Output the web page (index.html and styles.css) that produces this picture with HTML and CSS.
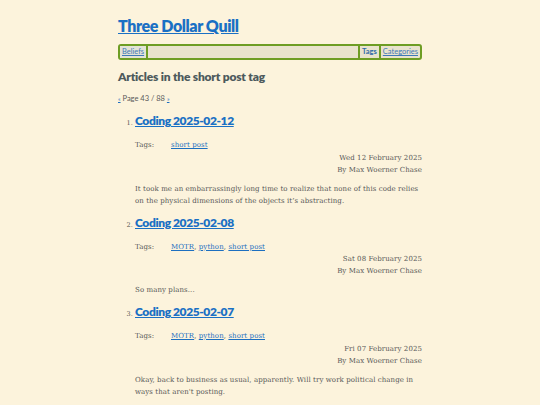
FILE: index.html
```html
<!DOCTYPE html>
<html>
<head>
<meta charset="utf-8">
<link rel="stylesheet" href="styles.css">
</head>
<body>
<div class="page">
  <h1 class="site-title"><a href="#">Three Dollar Quill</a></h1>
  <nav class="nav">
    <a class="nav-item nav-beliefs" href="#">Beliefs</a>
    <span class="nav-spacer"></span>
    <span class="nav-item nav-current">Tags</span>
    <a class="nav-item" href="#">Categories</a>
  </nav>
  <h2 class="section-title">Articles in the short post tag</h2>
  <p class="pager"><a href="#">«</a> Page 43 / 88 <a href="#">»</a></p>
  <ol class="articles">
    <li class="article">
      <h3 class="article-title"><a href="#">Coding 2025-02-12</a></h3>
      <div class="tags"><span class="tags-label">Tags:</span><a href="#">short post</a></div>
      <div class="meta">Wed 12 February 2025<br>By Max Woerner Chase</div>
      <p class="summary">It took me an embarrassingly long time to realize that none of this code relies on the physical dimensions of the objects it’s abstracting.</p>
    </li>
    <li class="article">
      <h3 class="article-title"><a href="#">Coding 2025-02-08</a></h3>
      <div class="tags"><span class="tags-label">Tags:</span><a href="#">MOTR</a>, <a href="#">python</a>, <a href="#">short post</a></div>
      <div class="meta">Sat 08 February 2025<br>By Max Woerner Chase</div>
      <p class="summary">So many plans...</p>
    </li>
    <li class="article">
      <h3 class="article-title"><a href="#">Coding 2025-02-07</a></h3>
      <div class="tags"><span class="tags-label">Tags:</span><a href="#">MOTR</a>, <a href="#">python</a>, <a href="#">short post</a></div>
      <div class="meta">Fri 07 February 2025<br>By Max Woerner Chase</div>
      <p class="summary">Okay, back to business as usual, apparently. Will try work political change in ways that aren't posting.</p>
    </li>
  </ol>
</div>
</body>
</html>
```

FILE: styles.css
```css
html, body {
  margin: 0;
  padding: 0;
  background: #fcf3dc;
}
body {
  font-family: "DejaVu Serif", serif;
  color: #575757;
  font-size: 7px;
  letter-spacing: 0.08px;
}
a {
  color: #1d6fc0;
}
.page {
  width: 304px;
  margin: 0 auto;
  padding-top: 15px;
}
.site-title {
  margin: 0;
  font-family: Lato, "Noto Sans", sans-serif;
  font-size: 16px;
  letter-spacing: -0.4px;
  line-height: 22px;
  font-weight: 800;
}
.site-title a {
  color: #1a70c4;
}
.nav {
  margin-top: 7px;
  display: flex;
  align-items: stretch;
  height: 12px;
  border: 2px solid #6e9d24;
  border-radius: 3px;
  background: #e9e3cd;
  font-family: Lato, "Noto Sans", sans-serif;
  font-size: 7.5px;
  letter-spacing: 0;
  line-height: 12px;
}
.nav-item {
  padding: 0 2px;
  color: #3e78b8;
}
.nav-beliefs {
  background: #e3e3d6;
  border-right: 2px solid #6e9d24;
}
.nav-spacer {
  flex: 1;
}
.nav-current {
  font-weight: 700;
  border-left: 2px solid #6e9d24;
  border-right: 2px solid #6e9d24;
  color: #2f6aa8;
}
.section-title {
  margin: 9px 0 0;
  font-family: Lato, "Noto Sans", sans-serif;
  font-size: 12px;
  letter-spacing: -0.2px;
  line-height: 16px;
  font-weight: 800;
  color: #4d5a5c;
}
.pager {
  margin: 9px 0 0;
  font-family: Lato, "Noto Sans", sans-serif;
  font-size: 7.5px;
  letter-spacing: 0;
  line-height: 10px;
  color: #5a5a5a;
}
.pager a {
  font-size: 6px;
}
.articles {
  margin: 8px 0 0;
  padding-left: 17px;
}
.article::marker {
  font-size: 6.5px;
  color: #555;
}
.article-title {
  margin: 0;
  font-family: Lato, "Noto Sans", sans-serif;
  font-size: 12px;
  letter-spacing: -0.4px;
  line-height: 17px;
  font-weight: 800;
}
.article-title a {
  color: #1a70c4;
}
.tags {
  margin-top: 10px;
  line-height: 12px;
}
.tags-label {
  display: inline-block;
  width: 36px;
}
.meta {
  margin-top: 0.5px;
  text-align: right;
  line-height: 12px;
}
.summary {
  margin: 7px 0 7px;
  line-height: 12px;
}
```
